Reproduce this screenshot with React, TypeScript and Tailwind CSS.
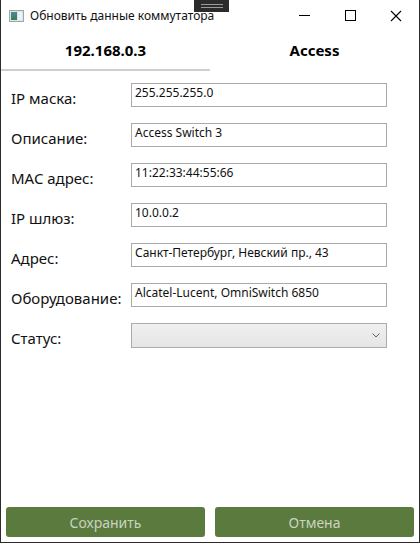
import React from 'react'

const fields: { label: string; value: string }[] = [
    { label: 'IP маска:', value: '255.255.255.0' },
    { label: 'Описание:', value: 'Access Switch 3' },
    { label: 'MAC адрес:', value: '11:22:33:44:55:66' },
    { label: 'IP шлюз:', value: '10.0.0.2' },
    { label: 'Адрес:', value: 'Санкт-Петербург, Невский пр., 43' },
    { label: 'Оборудование:', value: 'Alcatel-Lucent, OmniSwitch 6850' },
]

const font = { fontFamily: '"Noto Sans", "Open Sans", sans-serif' }

const App: React.FC = () => {
    return (
        <div className="relative flex h-[543px] w-[420px] flex-col border-x border-b border-[#2b2b2b] bg-white text-black" style={font}>
            {/* drag handle on top edge */}
            <div className="absolute left-[193px] top-0 flex h-[12px] w-[35px] flex-col items-center justify-center gap-[2px] bg-[#2b2b2b]">
                <div className="h-px w-[22px] bg-[#9a9a9a]" />
                <div className="h-px w-[22px] bg-[#9a9a9a]" />
            </div>

            {/* title bar */}
            <div className="flex h-[31px] items-center">
                <div className="ml-[8px] flex h-[12px] w-[15px] items-stretch border border-[#9aa] bg-[#dfe3e6] p-px">
                    <div className="w-[6px] bg-gradient-to-b from-[#4a8a9a] to-[#3a7a5a]" />
                    <div className="ml-px flex-1 bg-[#eef2f5]" />
                </div>
                <span className="ml-[6px] text-[12px] text-[#111]">Обновить данные коммутатора</span>
                <div className="ml-auto flex h-full items-center">
                    <div className="flex w-[46px] justify-center">
                        <div className="h-px w-[11px] bg-black" />
                    </div>
                    <div className="flex w-[46px] justify-center">
                        <div className="h-[11px] w-[11px] border border-black" />
                    </div>
                    <div className="flex w-[46px] justify-center">
                        <svg width="12" height="12" viewBox="0 0 12 12">
                            <path d="M1 1 L11 11 M11 1 L1 11" stroke="#000" strokeWidth="1.1" />
                        </svg>
                    </div>
                </div>
            </div>

            {/* tabs */}
            <div className="flex h-[40px]">
                <div className="flex w-[209px] flex-col">
                    <div className="flex flex-1 items-center justify-center text-[15px] font-bold">192.168.0.3</div>
                    <div className="h-[2px] bg-[#cfcfcf]" />
                </div>
                <div className="flex flex-1 items-center justify-center pb-[2px] text-[15px] font-bold">Access</div>
            </div>

            {/* form */}
            <div className="mt-[12px] flex flex-col">
                {fields.map((f) => (
                    <div key={f.label} className="flex h-[40px] items-start">
                        <span className="w-[130px] pl-[10px] pt-[4px] text-[15px] leading-[22px] text-[#111]">{f.label}</span>
                        <div className="h-[24px] w-[256px] border border-[#ababab] px-[3px] text-[12px] leading-[18px] text-[#111]">
                            {f.value}
                        </div>
                    </div>
                ))}
                <div className="flex h-[40px] items-start">
                    <span className="w-[130px] pl-[10px] pt-[4px] text-[15px] leading-[22px] text-[#111]">Статус:</span>
                    <div className="flex h-[25px] w-[256px] items-center justify-end border border-[#acacac] bg-gradient-to-b from-[#f0f0f0] to-[#e5e5e5] pr-[6px]">
                        <svg width="8" height="5" viewBox="0 0 8 5">
                            <path d="M0.5 0.5 L4 4 L7.5 0.5" fill="none" stroke="#606060" strokeWidth="1" />
                        </svg>
                    </div>
                </div>
            </div>

            {/* buttons */}
            <div className="mt-auto mb-[5px] flex gap-[10px] px-[5px]">
                <button className="h-[30px] flex-1 rounded-[3px] bg-[#5b7a3e] text-[14px] text-[#c9d3c0]">Сохранить</button>
                <button className="h-[30px] flex-1 rounded-[3px] bg-[#5b7a3e] text-[14px] text-[#c9d3c0]">Отмена</button>
            </div>
        </div>
    )
}

export default App
